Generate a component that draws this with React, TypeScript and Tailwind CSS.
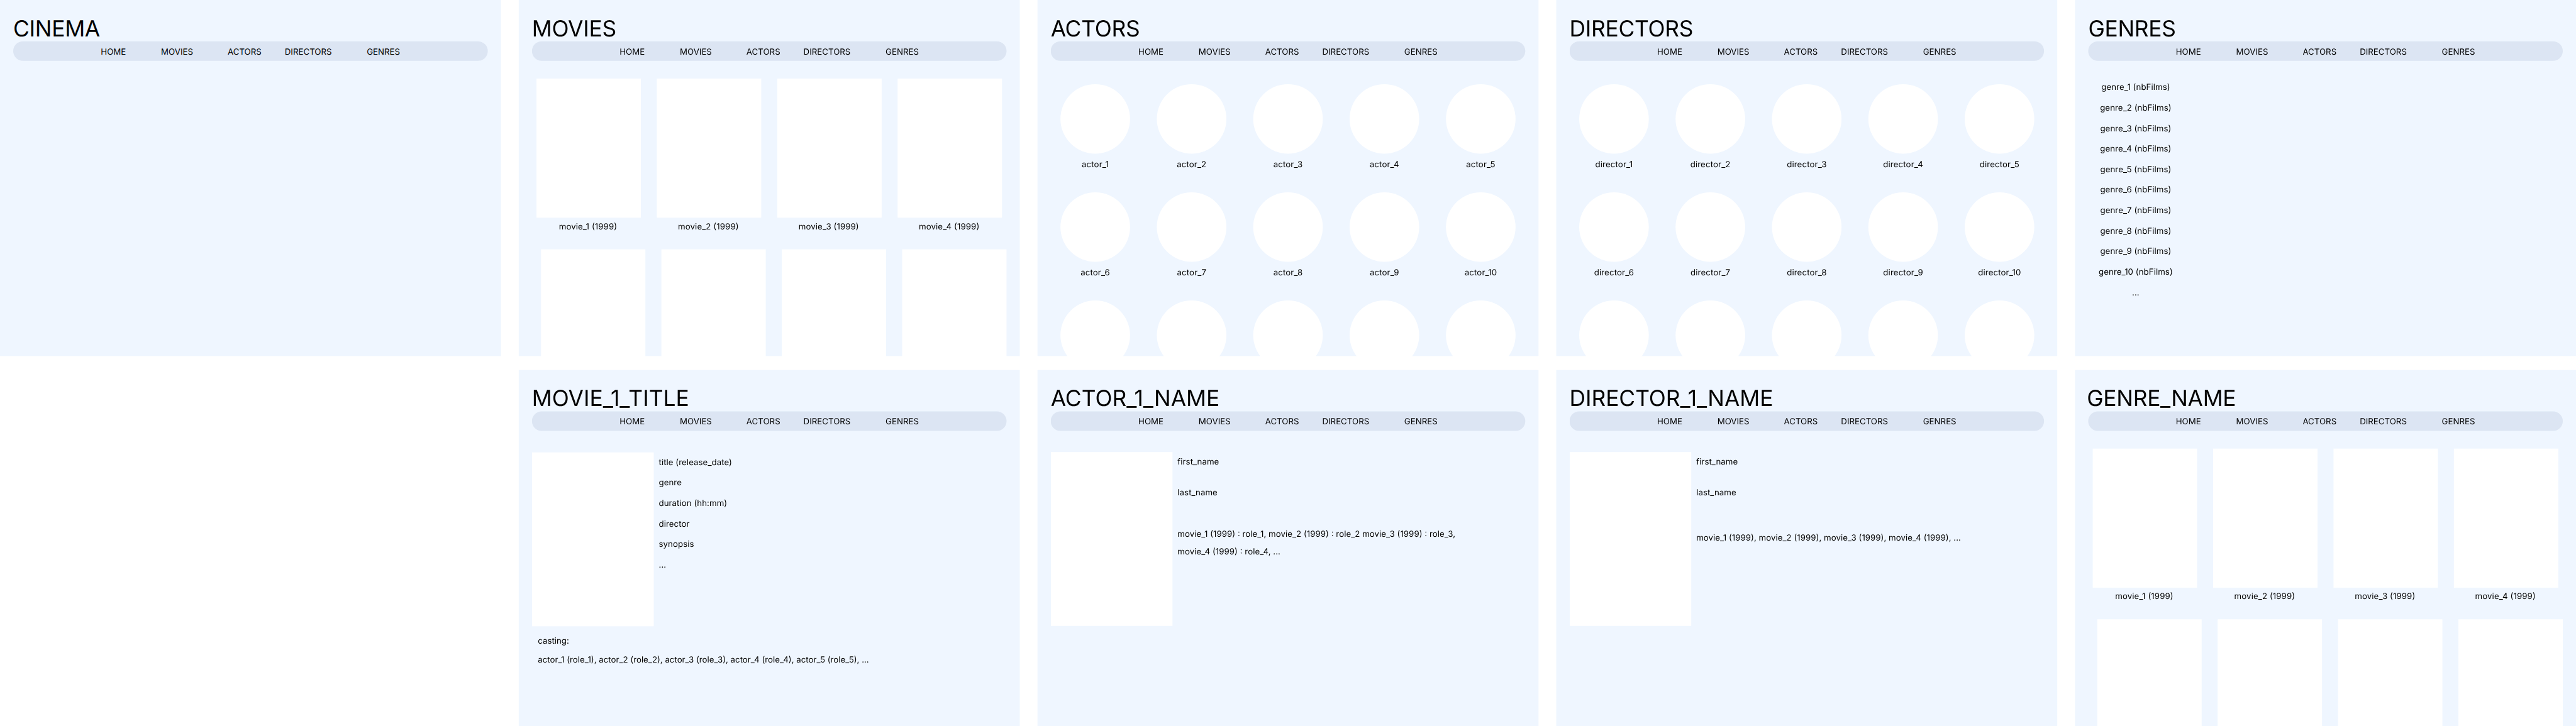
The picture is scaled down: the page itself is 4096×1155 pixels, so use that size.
import type { ReactNode } from "react";

const MOVIES = ["movie_1 (1999)", "movie_2 (1999)", "movie_3 (1999)", "movie_4 (1999)"];
const NUMBERS = [1, 2, 3, 4, 5, 6, 7, 8, 9, 10];

function NavBar() {
  return (
    <nav className="flex h-[56px] items-center rounded-full bg-[#dce5f3] pt-[3px] pl-[213px] text-center">
      <a className="w-[150px]">HOME</a>
      <a className="ml-[33px] w-[150px]">MOVIES</a>
      <a className="ml-[44px] w-[150px]">ACTORS</a>
      <a className="ml-[33px] w-[150px]">DIRECTORS</a>
      <a className="ml-[66px] w-[150px]">GENRES</a>
    </nav>
  );
}

function Screen({
  title,
  titleClass = "tracking-[-0.55px]",
  children,
}: {
  title: string;
  titleClass?: string;
  children?: ReactNode;
}) {
  return (
    <section className="h-[1024px] w-[1440px] overflow-hidden bg-[#eff6ff] px-[38px] pt-[42px]">
      <h1 className={`h-[77px] text-[64px] leading-[79px] ${titleClass}`}>{title}</h1>
      <NavBar />
      {children}
    </section>
  );
}

function MovieGrid() {
  return (
    <div className="pt-[51px]">
      <div className="flex gap-[46px] pl-[13px]">
        {MOVIES.map((movie) => (
          <div key={movie} className="w-[300px] shrink-0">
            <div className="h-[400px] bg-white" />
            <p className="mt-[10px] -ml-[4px] text-center tracking-[0.15px]">{movie}</p>
          </div>
        ))}
      </div>
      <div className="mt-[52px] flex gap-[46px] pl-[26px]">
        {MOVIES.map((movie) => (
          <div key={movie} className="h-[400px] w-[300px] shrink-0 bg-white" />
        ))}
      </div>
    </div>
  );
}

function PeopleGrid({ prefix }: { prefix: string }) {
  return (
    <div className="grid grid-cols-[repeat(5,200px)] gap-x-[77px] gap-y-[67px] pt-[67px] pl-[28px]">
      {NUMBERS.map((n) => (
        <div key={n}>
          <div className="size-[200px] rounded-full bg-white" />
          <p className="mt-[15px] text-center tracking-[0.2px]">{`${prefix}_${n}`}</p>
        </div>
      ))}
      {NUMBERS.slice(0, 5).map((n) => (
        <div key={`next-${n}`} className="size-[200px] rounded-full bg-white" />
      ))}
    </div>
  );
}

function GenreList() {
  return (
    <div className="flex w-[273px] flex-col gap-[30px] pt-[61px] text-center tracking-[0.08px]">
      {NUMBERS.map((n) => (
        <p key={n}>{`genre_${n} (nbFilms)`}</p>
      ))}
      <p>...</p>
    </div>
  );
}

function PersonDetails({ children }: { children: ReactNode }) {
  return (
    <div className="flex pt-[61px]">
      <div className="h-[500px] w-[350px] shrink-0 bg-white" />
      <div className="pt-[13px] pl-[14.5px] tracking-[0.06px]">
        <p>first_name</p>
        <p className="mt-[60px]">last_name</p>
        {children}
      </div>
    </div>
  );
}

export default function App() {
  return (
    <div className="h-[1155px] w-[4096px] overflow-hidden bg-white">
      <main className="grid h-[2088px] w-[7404px] origin-top-left scale-[0.553215] grid-cols-[repeat(5,1440px)] gap-x-[51px] gap-y-[40px] font-['Inter',sans-serif] text-[24px] leading-[29px] text-black [font-feature-settings:'calt'_1] [text-rendering:geometricPrecision]">
        <Screen title="CINEMA" />
        <Screen title="MOVIES">
          <MovieGrid />
        </Screen>
        <Screen title="ACTORS">
          <PeopleGrid prefix="actor" />
        </Screen>
        <Screen title="DIRECTORS">
          <PeopleGrid prefix="director" />
        </Screen>
        <Screen title="GENRES">
          <GenreList />
        </Screen>

        <div />
        <Screen title="MOVIE_1_TITLE" titleClass="tracking-[-0.1px]">
          <div className="flex pt-[62px]">
            <div className="h-[500px] w-[350px] shrink-0 bg-white" />
            <div className="flex flex-col gap-[30px] pt-[13px] pl-[14.5px] tracking-[0.08px]">
              <p>title (release_date)</p>
              <p>genre</p>
              <p>duration (hh:mm)</p>
              <p>director</p>
              <p>synopsis</p>
              <p>...</p>
            </div>
          </div>
          <div className="pt-[15px] pl-[17px] leading-[54px]">
            <p>casting:</p>
            <p>actor_1 (role_1), actor_2 (role_2), actor_3 (role_3), actor_4 (role_4), actor_5 (role_5), ...</p>
          </div>
        </Screen>
        <Screen title="ACTOR_1_NAME" titleClass="tracking-[-0.1px]">
          <PersonDetails>
            <p className="mt-[79px] leading-[51px] whitespace-nowrap">
              movie_1 (1999) : role_1, movie_2 (1999) : role_2 movie_3 (1999) : role_3,
              <br />
              movie_4 (1999) : role_4, ...
            </p>
          </PersonDetails>
        </Screen>
        <Screen title="DIRECTOR_1_NAME" titleClass="tracking-[-0.15px]">
          <PersonDetails>
            <p className="mt-[101px] whitespace-nowrap">
              movie_1 (1999), movie_2 (1999), movie_3 (1999), movie_4 (1999), ...
            </p>
          </PersonDetails>
        </Screen>
        <Screen title="GENRE_NAME" titleClass="-ml-1 tracking-[-0.55px]">
          <MovieGrid />
        </Screen>
      </main>
    </div>
  );
}
